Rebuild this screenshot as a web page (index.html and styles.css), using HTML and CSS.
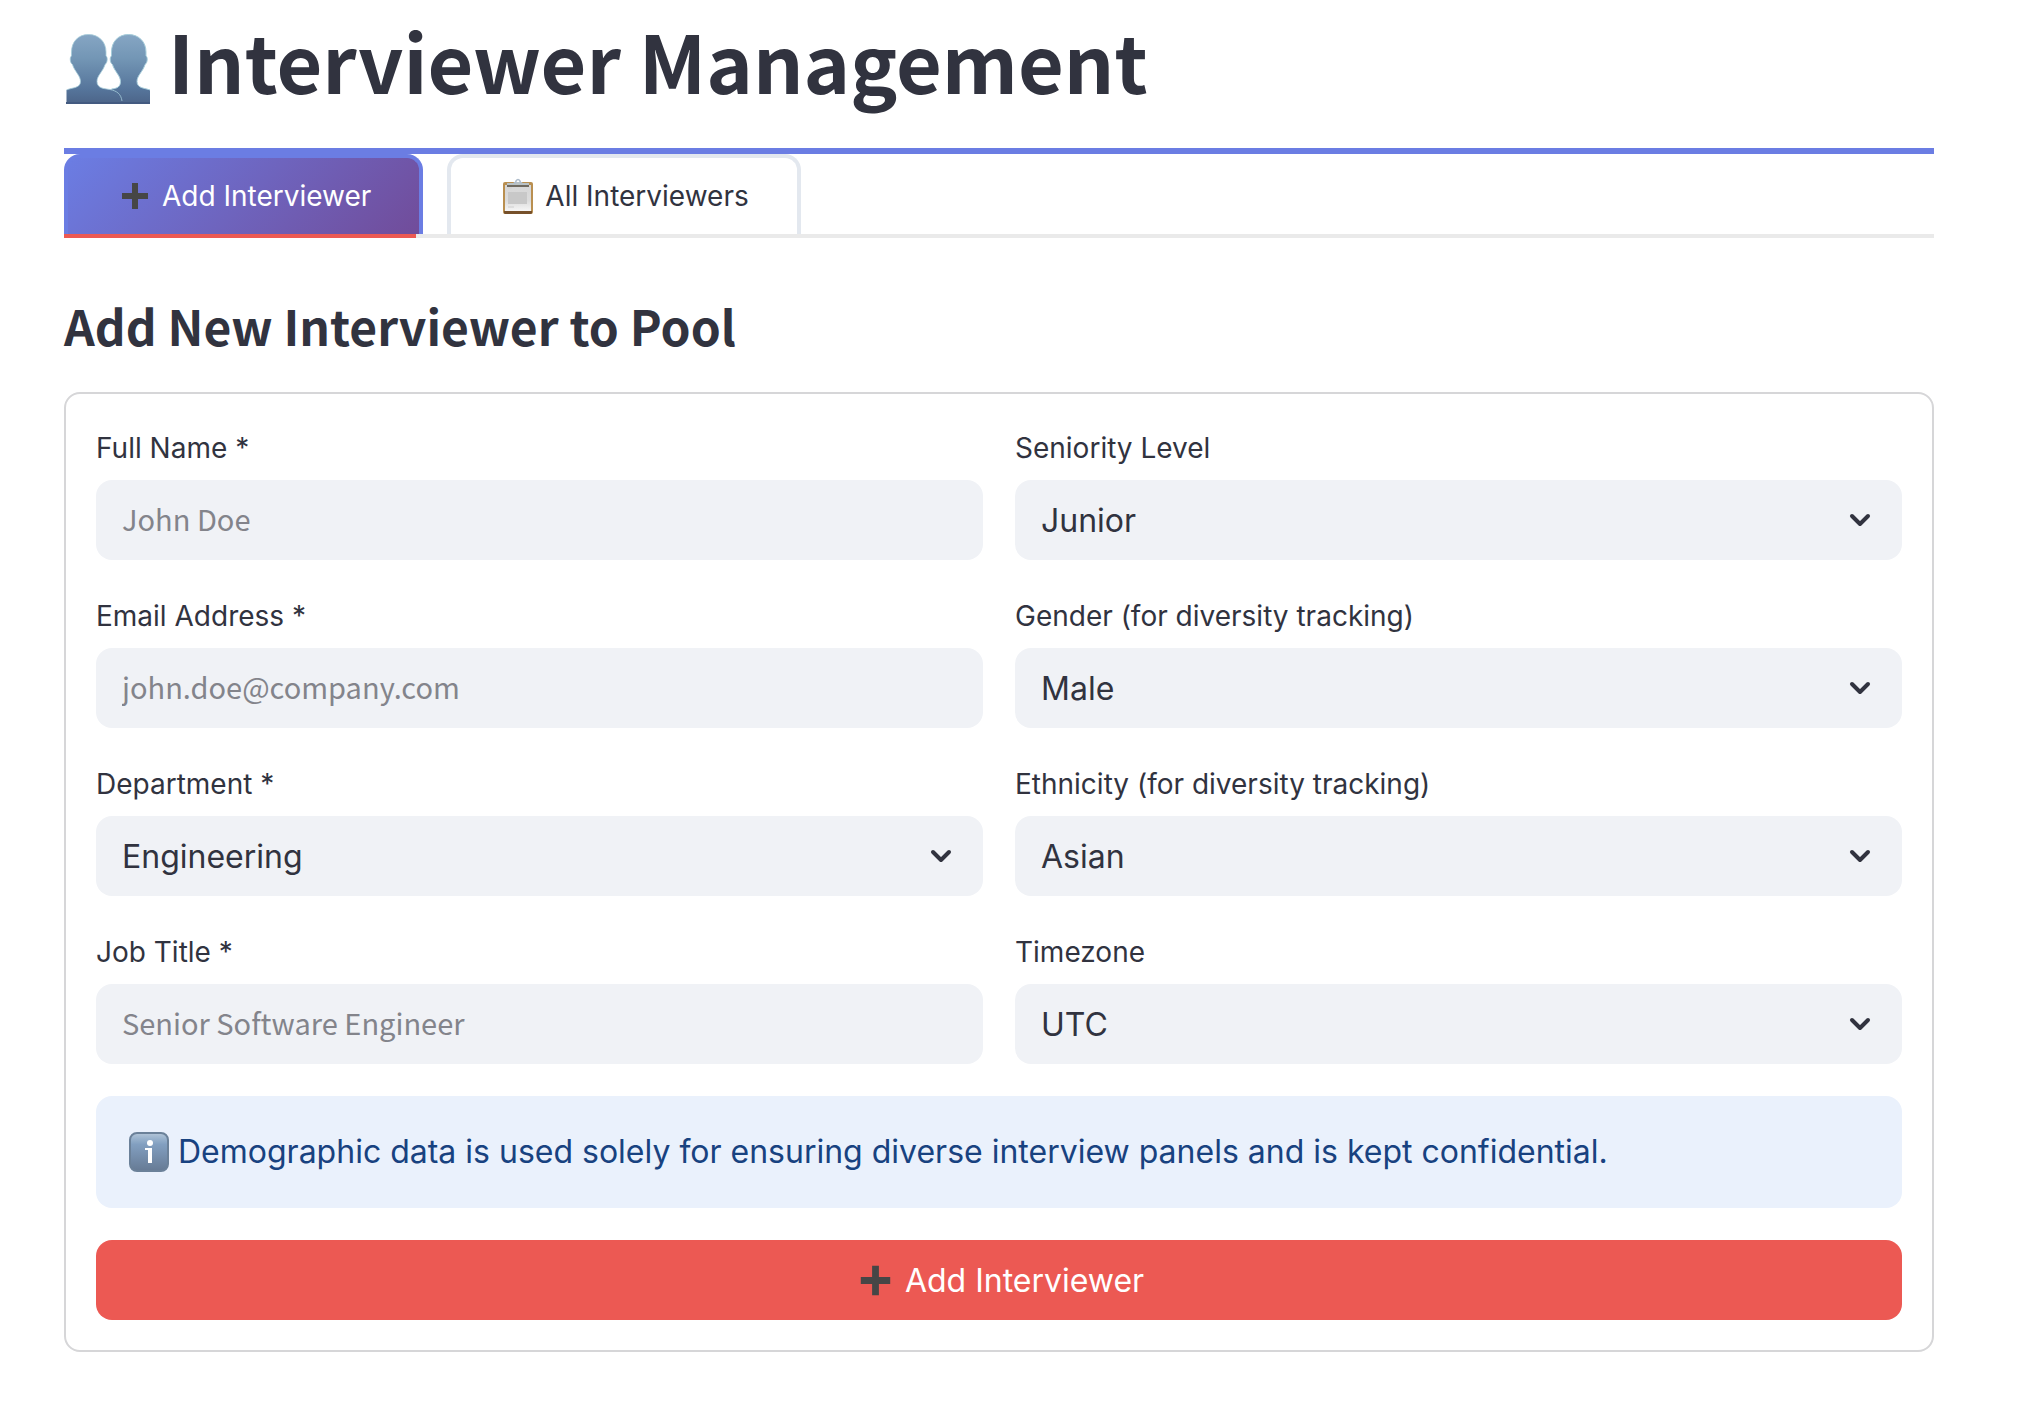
FILE: index.html
```html
<!DOCTYPE html>
<html lang="en">
<head>
<meta charset="utf-8">
<meta name="viewport" content="width=device-width, initial-scale=1">
<title>Interviewer Management</title>
<link rel="stylesheet" href="styles.css">
</head>
<body>
<svg class="defs" aria-hidden="true">
  <defs>
    <linearGradient id="bust" gradientUnits="userSpaceOnUse" x1="0" y1="2" x2="0" y2="72">
      <stop offset="0" stop-color="#86a6c4"/><stop offset=".35" stop-color="#7396b5"/><stop offset=".8" stop-color="#55749a"/><stop offset="1" stop-color="#4c6488"/>
    </linearGradient>
    <linearGradient id="tile" x1="0" y1="0" x2="0" y2="1">
      <stop offset="0" stop-color="#b4c6d8"/><stop offset=".14" stop-color="#9ab3cd"/><stop offset=".3" stop-color="#829fc0"/><stop offset="1" stop-color="#667a94"/>
    </linearGradient>
    <linearGradient id="sheet" x1="0" y1="0" x2="0" y2="1">
      <stop offset="0" stop-color="#d6d6d6"/><stop offset=".6" stop-color="#dcdcdc"/><stop offset="1" stop-color="#f6f6f6"/>
    </linearGradient>
  </defs>
  <symbol id="i-plus" viewBox="0 0 38 38"><path d="M16 6h6v10h10v6H22v10h-6V22H6v-6h10z" fill="#464646"/></symbol>
  <symbol id="i-chevron" viewBox="0 0 24 24"><path d="M4 8l8 8 8-8" fill="none" stroke="#31333f" stroke-width="4" stroke-linecap="round" stroke-linejoin="round"/></symbol>
</svg>
<main class="page">
  <header class="page-header">
    <h1>
      <svg class="title-icon" viewBox="0 0 88 72" aria-hidden="true">
        <path d="M64.500 2.500C54 2.500 47.500 10 47.500 20v4c-2 1-1.500 7 1 8.500 2 7 8 11 8 17 0 5-3 7-9 7.500V72H86V58c-5-2-13-1.500-13-8.500 0-6 6-10 8-17 2.500-1.500 3-7.500 1-8.500v-4C82 10 75 2.500 64.500 2.500z" fill="url(#bust)"/>
        <path d="M24.500 2.500C14 2.500 7.500 10 7.500 20v4c-2 1-1.500 7 1 8.500 2 7 8 11 8 17 0 7-9 6-14 8.500V72H58C58 63 54 59.500 46 57.500c-6-1-13-1-13-8 0-6 6-10 8-17 2.500-1.500 3-7.500 1-8.500v-4C42 10 35 2.500 24.500 2.500z" fill="url(#bust)"/>
        <path d="M86 58c-5-2-13-1.500-13-8.500 0-6 6-10 8-17 2.500-1.500 3-7.500 1-8.500v-4C82 10 75 2.500 64.500 2.500S47.500 10 47.500 20v4c-2 1-1.500 7 1 8.500 2 7 8 11 8 17 0 5-3 7-9 7.500" fill="none" stroke="#a5ccda"/>
        <path d="M2.500 58c5-2.500 14-1.500 14-8.500 0-6-6-10-8-17-2.500-1.500-3-7.500-1-8.500v-4C7.500 10 14 2.500 24.500 2.500S42 10 42 20v4c2 1 1.500 7-1 8.500-2 7-8 11-8 17 0 7 7 7 13 8C53 59 57 62 58 69" fill="none" stroke="#a5ccda" stroke-opacity=".8"/>
        <path d="M2 71h84" stroke="#435a80" stroke-width="2"/>
      </svg>
      <span>Interviewer Management</span>
    </h1>
  </header>

  <div class="tabs" role="tablist">
    <button class="tab tab-active" type="button" role="tab" aria-selected="true"><svg class="tab-icon" aria-hidden="true"><use href="#i-plus"/></svg>Add Interviewer</button>
    <button class="tab" type="button" role="tab" aria-selected="false"><svg class="tab-icon" viewBox="0 0 38 38" aria-hidden="true">
        <rect x="4" y="5" width="30" height="32" rx="2" fill="#b98f50"/>
        <path d="M5 34h28v1.500q0 1.500-1.500 1.500h-25Q5 37 5 35.500z" fill="#76502a"/>
        <rect x="6" y="8" width="26" height="26" fill="url(#sheet)"/>
        <path d="M9 15h19v12H9z" fill="#c8c8c8"/>
        <path d="M9 11h4M9 30h6" stroke="#cfcfcf"/>
        <path d="M8 9h22" stroke="#6f6a60" stroke-width="2"/>
        <path d="M8 8V6h6l2-1h6l2 1h6v2z" fill="#b9c2c5"/>
        <path d="M15 6q2 0 2-2 2-3 4 0 0 2 2 2" fill="none" stroke="#aebccb" stroke-width="1.500"/>
      </svg>All Interviewers</button>
    <span class="tab-highlight"></span>
  </div>

  <section>
    <h2>Add New Interviewer to Pool</h2>
    <form class="panel">
      <div class="fields">
        <div class="field">
          <label for="name">Full Name *</label>
          <input id="name" type="text" placeholder="John Doe">
        </div>
        <div class="field">
          <label for="level">Seniority Level</label>
          <div class="select"><select id="level"><option>Junior</option></select><svg aria-hidden="true"><use href="#i-chevron"/></svg></div>
        </div>
        <div class="field">
          <label for="email">Email Address *</label>
          <input id="email" type="text" placeholder="john.doe@company.com">
        </div>
        <div class="field">
          <label for="gender">Gender (for diversity tracking)</label>
          <div class="select"><select id="gender"><option>Male</option></select><svg aria-hidden="true"><use href="#i-chevron"/></svg></div>
        </div>
        <div class="field">
          <label for="dept">Department *</label>
          <div class="select"><select id="dept"><option>Engineering</option></select><svg aria-hidden="true"><use href="#i-chevron"/></svg></div>
        </div>
        <div class="field">
          <label for="ethnicity">Ethnicity (for diversity tracking)</label>
          <div class="select"><select id="ethnicity"><option>Asian</option></select><svg aria-hidden="true"><use href="#i-chevron"/></svg></div>
        </div>
        <div class="field">
          <label for="job">Job Title *</label>
          <input id="job" type="text" placeholder="Senior Software Engineer">
        </div>
        <div class="field">
          <label for="tz">Timezone</label>
          <div class="select"><select id="tz"><option>UTC</option></select><svg aria-hidden="true"><use href="#i-chevron"/></svg></div>
        </div>
      </div>

      <p class="notice">
        <svg class="notice-icon" viewBox="0 0 42 42" aria-hidden="true">
          <rect x="2" y="2" width="38" height="38" rx="7" fill="url(#tile)" stroke="#6b8199" stroke-width="2"/>
          <circle cx="22" cy="12" r="3" fill="#fff"/>
          <path d="M17 17h7v15h-4V19h-3z" fill="#fff"/>
        </svg>
        <span>Demographic data is used solely for ensuring diverse interview panels and is kept confidential.</span>
      </p>

      <button class="submit" type="submit"><svg class="submit-icon" aria-hidden="true"><use href="#i-plus"/></svg>Add Interviewer</button>
    </form>
  </section>
</main>
</body>
</html>
```

FILE: styles.css
```css
* { box-sizing: border-box; }

body {
  margin: 0;
  background: #fff;
  color: #31333f;
  font-family: Inter, "Liberation Sans", sans-serif;
}

button, input, select { font: inherit; color: inherit; border: 0; }

.defs { position: absolute; width: 0; height: 0; }

.page { padding: 0 100px 48px 64px; }

/* Header */
.page-header { border-bottom: 6px solid #6b7de3; padding: 8px 0 36px; }

h1, h2 { margin: 0; font-family: "Noto Sans CJK JP", "Noto Sans", sans-serif; font-weight: 700; }

h1 {
  display: flex;
  align-items: center;
  gap: 16px;
  font-size: 79px;
  line-height: 104px;
}

.title-icon { width: 88px; height: 72px; flex: none; margin-top: 16px; }

/* Tabs */
.tabs {
  position: relative;
  display: flex;
  gap: 24px;
  border-bottom: 4px solid #eaeaea;
}

.tab {
  display: flex;
  align-items: center;
  gap: 8px;
  height: 80px;
  padding: 0 48px;
  border: 4px solid #e3e8ef;
  border-bottom: 0;
  border-radius: 16px 16px 0 0;
  background: #fff;
  font-size: 28px;
}

.tab-active {
  border-color: #6b7de3;
  background: linear-gradient(135deg, #6b7de3 0%, #714c9a 100%);
  color: #fff;
}

.tab-icon { width: 38px; height: 38px; }

.tab-highlight {
  position: absolute;
  left: 0;
  bottom: -4px;
  width: 352px;
  height: 4px;
  background: #ec5953;
}

/* Form */
h2 { padding: 54px 0 34px; font-size: 48px; line-height: 66px; }

.panel {
  display: flex;
  flex-direction: column;
  gap: 32px;
  padding: 30px;
  border: 2px solid #d6d6d8;
  border-radius: 16px;
}

.fields { display: grid; grid-template-columns: 1fr 1fr; gap: 32px; }

.field { display: flex; flex-direction: column; gap: 8px; }

label { font-size: 28px; line-height: 48px; }

input, select {
  width: 100%;
  height: 80px;
  padding: 0 26px;
  border-radius: 16px;
  background: #f0f2f6;
}

input { padding-bottom: 4px; font-family: "Noto Sans CJK JP", "Noto Sans", sans-serif; font-size: 29px; }
input::placeholder { color: #83848b; opacity: 1; }

.select { display: grid; align-items: center; }
.select > * { grid-area: 1 / 1; }
.select svg { width: 24px; height: 24px; justify-self: end; margin-right: 30px; pointer-events: none; }

select { appearance: none; font-size: 32px; }

.notice {
  display: flex;
  align-items: center;
  gap: 8px;
  margin: 0;
  padding: 32px;
  border-radius: 16px;
  background: #eaf1fc;
  color: #184280;
  font-size: 32px;
  line-height: 48px;
}

.notice-icon { width: 42px; height: 42px; flex: none; }

.submit {
  display: flex;
  align-items: center;
  justify-content: center;
  gap: 8px;
  height: 80px;
  border-radius: 16px;
  background: #ec5953;
  color: #fff;
  font-size: 32px;
}

.submit-icon { width: 43px; height: 43px; }
```
